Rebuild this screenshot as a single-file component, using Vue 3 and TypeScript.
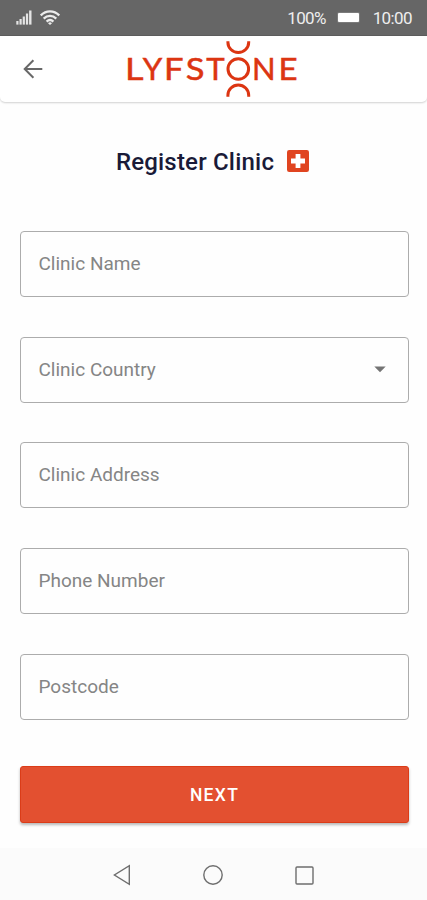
<script setup lang="ts">
import { reactive } from 'vue'

interface Field {
  key: string
  label: string
  select?: boolean
}

interface Letter {
  char: string
  x: number
  stretch: number
}

const letters: Letter[] = [
  { char: 'L', x: 125, stretch: 1.2 },
  { char: 'Y', x: 142.7, stretch: 1.04 },
  { char: 'F', x: 164, stretch: 1.15 },
  { char: 'S', x: 185.7, stretch: 1.15 },
  { char: 'T', x: 206.2, stretch: 1.04 },
  { char: 'N', x: 252, stretch: 1.03 },
  { char: 'E', x: 278.5, stretch: 1.1 },
]

const fields: Field[] = [
  { key: 'name', label: 'Clinic Name' },
  { key: 'country', label: 'Clinic Country', select: true },
  { key: 'address', label: 'Clinic Address' },
  { key: 'phone', label: 'Phone Number' },
  { key: 'postcode', label: 'Postcode' },
]

const form = reactive<Record<string, string>>({})
</script>

<template>
  <div class="screen">
    <div class="status">
      <svg class="signal" width="16" height="15" viewBox="0 0 16 15" fill="#e4e4e4">
        <rect x="0.3" y="11" width="2.2" height="3.6" />
        <rect x="3.5" y="9" width="2.2" height="5.6" />
        <rect x="6.7" y="6.5" width="2.2" height="8.1" />
        <rect x="9.9" y="3.5" width="2.2" height="11.1" />
        <rect x="13.1" y="0.5" width="2.4" height="14.1" />
      </svg>
      <svg class="wifi" width="20" height="15" viewBox="0 0 20 15" fill="none" stroke="#ececec" stroke-width="2.3">
        <path d="M0.8 5.4C6 0 14 0 19.2 5.4" />
        <path d="M3.7 8.6C7.4 5 12.6 5 16.3 8.6" />
        <path d="M6.6 11.6C8.6 9.7 11.4 9.7 13.4 11.6" />
        <path d="M8 13.2Q10 11.5 12 13.2L10 15Z" fill="#ececec" stroke="none" />
      </svg>
      <span class="percent">100%</span>
      <span class="battery"></span>
      <span class="clock">10:00</span>
    </div>

    <header class="bar">
      <button class="back" aria-label="Back">
        <svg width="20" height="20" viewBox="0 0 20 20" fill="none" stroke="#686868" stroke-width="2">
          <path d="M19.3 10H2M10.4 1.3L1.7 10l8.7 8.7" />
        </svg>
      </button>
      <svg class="logo" width="184" height="58" viewBox="121 40 184 58">
        <g class="wordmark">
          <text
            v-for="letter in letters"
            :key="letter.char"
            :transform="`translate(${letter.x} 79.8) scale(${letter.stretch} 1)`"
          >{{ letter.char }}</text>
        </g>
        <g fill="none" stroke="#dc3512" stroke-width="3">
          <circle cx="238.3" cy="69" r="10.3" />
          <path d="M227.9 41.2v1.1a10.4 10.2 0 0 0 20.8 0v-1.1" />
          <path d="M227.9 96.8v-1.6a10.4 10.2 0 0 1 20.8 0v1.6" />
        </g>
      </svg>
    </header>

    <main class="content">
      <h1 class="title">
        <span>Register Clinic</span>
        <svg width="22" height="22" viewBox="0 0 22 22">
          <rect width="22" height="22" rx="2.2" fill="#e04420" />
          <path d="M8.6 4h4.8v4.6H18v4.8h-4.6V18H8.6v-4.6H4V8.6h4.6z" fill="#fff" />
        </svg>
      </h1>

      <form class="fields" @submit.prevent>
        <label v-for="field in fields" :key="field.key" class="field">
          <input v-model="form[field.key]" :placeholder="field.label" :readonly="field.select" />
          <svg v-if="field.select" width="12" height="7" viewBox="0 0 12 7">
            <path d="M0.3 0.4h11.4L6 6.3z" fill="#747474" />
          </svg>
        </label>
        <button class="next" type="submit">NEXT</button>
      </form>
    </main>

    <nav class="nav">
      <svg width="18" height="22" viewBox="0 0 18 22"><path d="M16.3 1.7v18.6L1.4 11z" /></svg>
      <svg width="20" height="20" viewBox="0 0 20 20"><circle cx="10" cy="10" r="9.2" /></svg>
      <svg width="19" height="19" viewBox="0 0 19 19"><rect x="1" y="1" width="17" height="17" rx="1" /></svg>
    </nav>
  </div>
</template>

<style>
body {
  background: #fefefe;
}
</style>

<style scoped>
.screen {
  display: flex;
  flex-direction: column;
  width: 427px;
  height: 900px;
  overflow: hidden;
  background: #fefefe;
  font-family: Roboto, 'Liberation Sans', sans-serif;
}
.status {
  display: flex;
  align-items: center;
  box-sizing: border-box;
  height: 36px;
  padding: 0 15px 0 16px;
  border-bottom: 1px solid #5d5d5d;
  background: #666;
  color: #eee;
  font-size: 17px;
}
.wifi {
  margin-left: 8px;
}
.percent {
  margin-left: auto;
  letter-spacing: -0.7px;
}
.battery {
  width: 21px;
  height: 9px;
  margin: 0 14px 0 12px;
  border-radius: 1px;
  background: #fff;
  box-shadow: 0 0 0 1px #7b7b7b;
}
.clock {
  letter-spacing: -0.6px;
}
.bar {
  display: flex;
  align-items: center;
  box-sizing: border-box;
  height: 66px;
  padding: 0 0 0 23px;
  border-radius: 0 0 5px 5px;
  background: #fff;
  box-shadow: 0 1px 2px rgba(0, 0, 0, 0.18);
}
.back {
  display: flex;
  margin: 0;
  padding: 0;
  border: 0;
  background: none;
}
.logo {
  margin-left: 78px;
}
.wordmark {
  fill: #dc3512;
  stroke: #dc3512;
  stroke-width: 0.5px;
  font-family: Lato, sans-serif;
  font-size: 30px;
}
.content {
  flex: 1;
  padding: 0 18px 0 20px;
}
.title {
  display: flex;
  align-items: center;
  justify-content: center;
  gap: 13px;
  height: 30px;
  margin: 44px 4px 55px 0;
  color: #191a38;
  font-size: 24px;
  font-weight: 500;
  letter-spacing: 0.2px;
}
.title span {
  padding-top: 2px;
}
.fields {
  display: flex;
  flex-direction: column;
}
.field {
  display: flex;
  align-items: center;
  box-sizing: border-box;
  height: 66px;
  margin-bottom: 39.7px;
  padding: 0 22px 0 17.5px;
  border: 1px solid #acacac;
  border-radius: 4px;
  background: #fefefe;
}
.field input {
  flex: 1;
  min-width: 0;
  padding: 0 0 1px;
  border: 0;
  outline: 0;
  background: none;
  color: #333;
  font-family: inherit;
  font-size: 19px;
  letter-spacing: 0;
}
.field input::placeholder {
  color: #858585;
  opacity: 1;
}
.next {
  height: 57px;
  margin-top: 7px;
  padding-top: 2px;
  border: 1px solid #db3c18;
  border-radius: 3px;
  background: #e35030;
  box-shadow: 0 2px 3px rgba(0, 0, 0, 0.28);
  color: #fff;
  font-family: inherit;
  font-size: 17.5px;
  font-weight: 500;
  letter-spacing: 1.3px;
}
.nav {
  display: flex;
  align-items: center;
  justify-content: center;
  gap: 72px;
  box-sizing: border-box;
  height: 52px;
  padding: 2px 1px 0 0;
  background: #fbfbfb;
}
.nav svg {
  fill: none;
  stroke: #6e6e6e;
  stroke-width: 1.4px;
}
</style>
